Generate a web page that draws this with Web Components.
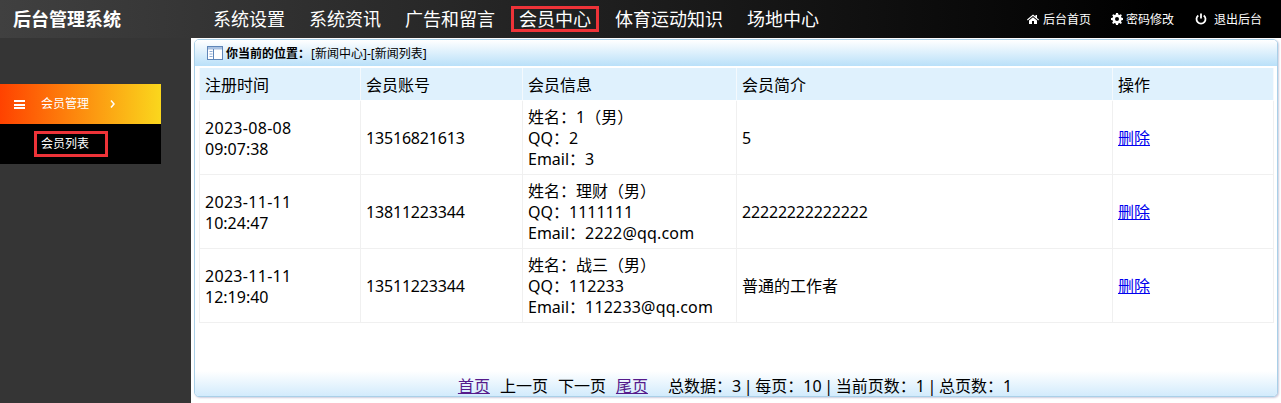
<!DOCTYPE html>
<html lang="zh">
<head>
<meta charset="utf-8">
<title>后台管理系统</title>
<style>
  html, body { margin: 0; height: 100%; overflow: hidden; background: #fff; }
  body { font-family: "Noto Sans", "Noto Sans CJK SC", sans-serif; color: #000; }
  admin-page { height: 403px; }
  .phone { letter-spacing: -.18px; }
  .date { letter-spacing: .3px; }
  .mail { letter-spacing: .18px; }
  grid-row a { color: #00e; }
</style>
</head>
<body>
<script>
const define = (name, html) => {
  customElements.define(name, class extends HTMLElement {
    constructor() {
      super();
      this.attachShadow({ mode: 'open' }).innerHTML = html;
    }
  });
};

define('top-link', `
  <style>
    :host { display: block; padding: 0 12px; font-size: 18px; line-height: 26px; color: #fff; white-space: nowrap; }
    :host([active]) span { display: block; margin: 0 -8px; padding: 0 5px; border: 3px solid #ee3338; line-height: 20px; }
  </style>
  <span><slot></slot></span>`);

define('tool-link', `
  <style>
    :host { display: flex; align-items: center; font-size: 12px; color: #fff; white-space: nowrap; }
    ::slotted(svg) { width: 12px; height: 12px; fill: #fff; margin-right: 4px; }
  </style>
  <slot name="icon"></slot><slot></slot>`);

define('top-bar', `
  <style>
    :host { display: flex; align-items: center; height: 38px; color: #fff;
      background: linear-gradient(to right, #404040, #000 90%); }
    .logo { width: 201px; padding: 0 0 2px 13px; box-sizing: border-box; font-size: 18px; font-weight: 700; white-space: nowrap; }
    nav { display: flex; align-items: center; flex: 1; }
    .tools { display: flex; gap: 20px; margin-right: 19px; }
    ::slotted(tool-link:last-child) { margin-left: 1px; }
  </style>
  <div class="logo"><slot name="logo"></slot></div>
  <nav><slot name="nav"></slot></nav>
  <div class="tools"><slot name="tools"></slot></div>`);

define('side-menu', `
  <style>
    :host { display: block; width: 191px; flex: none; background: #353535; padding-top: 46px; box-sizing: border-box; color: #fff; font-size: 12px; }
    .head { display: flex; align-items: center; width: 161px; height: 40px; background: linear-gradient(to right, #ff4200, #fad71d); }
    .bars { width: 11px; height: 9px; margin-left: 14px; margin-right: 16px; flex: none;
      background: linear-gradient(#fff 2px, transparent 2px 3.5px, #fff 3.5px 5.5px, transparent 5.5px 7px, #fff 7px); }
    .title { padding-bottom: 2px; }
    svg { width: 5px; height: 8px; margin-left: 21px; fill: none; stroke: #fff; stroke-width: 1.5; }
    .sub { width: 161px; height: 40px; background: #000; display: flex; align-items: center; padding-left: 34px; box-sizing: border-box; }
    .box { border: 3px solid #ee3338; height: 20px; width: 64px; padding-left: 4px; line-height: 19px; white-space: nowrap; }
  </style>
  <div class="head"><span class="bars"></span><span class="title"><slot name="title"></slot></span><svg viewBox="0 0 5 8"><path d="M1 .5l3 3.500-3 3.500"/></svg></div>
  <div class="sub"><div class="box"><slot></slot></div></div>`);

define('grid-row', `
  <style>
    :host { display: grid; grid-template-columns: 162px 162px 214px 376px 161px; font-size: 16px; line-height: 21px; min-height: 74px; }
    :host([head]) { min-height: 33px; background: #dff1fd; }
    :host([head]) ::slotted(*) { border-bottom-color: #fff; border-right-color: #f4f9fd; }
    ::slotted(*) { display: flex; align-items: center; padding: 2px 5px 0; box-sizing: border-box; border-right: 1px solid #f0f0f0; border-bottom: 1px solid #f0f0f0; }
    ::slotted(:first-child) { border-left: 1px solid #f0f0f0; }
    :host([head]) ::slotted(:first-child) { border-left-color: #f4f9fd; }
  </style>
  <slot></slot>`);

define('main-panel', `
  <style>
    :host { display: flex; flex-direction: column; box-sizing: border-box; flex: none; width: 1084px; height: 358px; margin: 1px 0 0 3px;
      border: 1px solid #a9d0e8; border-radius: 5px; box-shadow: 1px 1px 2px #ccd; background: #fff; overflow: hidden; }
    .crumb { display: flex; align-items: center; height: 26px; padding-left: 12px; font-size: 12px; flex: none;
      background: linear-gradient(#fff, #b9e0f9); }
    .crumb svg { width: 16px; height: 14px; margin-right: 3px; }
    .crumb b { margin-right: 1px; }
    .body { flex: 1; padding: 2px 3px 0 4px; }
    .foot { display: flex; justify-content: center; align-items: flex-end; height: 25px; padding-right: 2px; flex: none; font-size: 16px; line-height: 20px; white-space: nowrap;
      background: linear-gradient(#fff, #d2ebfc); }
  </style>
  <div class="crumb">
    <svg viewBox="0 0 16 14"><rect x=".5" y=".5" width="15" height="13" fill="#fff" stroke="#5f86b8"/><rect x="1" y="1" width="14" height="2.500" fill="#a9c2e2"/><path d="M6.500 3v10" stroke="#5f86b8"/><path d="M2.500 5.500h3M2.500 8h3M2.500 10.500h3" stroke="#8fabd2"/></svg>
    <b><slot name="label"></slot></b><slot name="path"></slot>
  </div>
  <div class="body"><slot></slot></div>
  <div class="foot"><slot name="foot"></slot></div>`);

define('pager-bar', `
  <style>
    :host { display: flex; gap: 10px; }
    ::slotted(a) { color: #551a8b; }
    ::slotted(.sum) { margin-left: 10px; word-spacing: -1.5px; }
  </style>
  <slot></slot>`);

define('admin-page', `
  <style>
    :host { display: block; overflow: hidden; }
    .cols { display: flex; height: 365px; }
  </style>
  <slot name="top"></slot>
  <div class="cols"><slot name="side"></slot><slot></slot></div>`);
</script>

<admin-page>
  <top-bar slot="top">
    <span slot="logo">后台管理系统</span>
    <top-link slot="nav">系统设置</top-link>
    <top-link slot="nav">系统资讯</top-link>
    <top-link slot="nav">广告和留言</top-link>
    <top-link slot="nav" active>会员中心</top-link>
    <top-link slot="nav">体育运动知识</top-link>
    <top-link slot="nav">场地中心</top-link>
    <tool-link slot="tools"><svg slot="icon" viewBox="0 0 12 12"><path d="M6 1.500L0 6.600l.7.800L6 3l5.300 4.400.7-.8-2-1.700V2H8.500v1.500zM2 7.500V11h3V8h2v3h3V7.500L6 4.200z"/></svg>后台首页</tool-link>
    <tool-link slot="tools"><svg slot="icon" viewBox="0 0 12 12" style="margin-right:3px"><path fill-rule="evenodd" d="M5 0h2l.3 1.600 1.100.5L9.800 1.200l1.100 1.100-.9 1.300.5 1.100L12 5v2l-1.600.3-.4 1.100.9 1.400-1.100 1.100-1.400-.9-1.100.4L7 12H5l-.3-1.600-1.100-.4-1.400.9-1.100-1.100.9-1.400-.4-1.100L0 7V5l1.600-.3.500-1.100-.9-1.300 1.100-1.100 1.400.9 1.100-.5zM6 4a2 2 0 100 4 2 2 0 000-4z"/></svg>密码修改</tool-link>
    <tool-link slot="tools"><svg slot="icon" viewBox="0 0 12 12" style="margin-right:7px"><path d="M6 .5v5" fill="none" stroke="#fff" stroke-width="1.800"/><path d="M3.300 2.500a4.500 4.500 0 105.400 0" fill="none" stroke="#fff" stroke-width="1.800"/></svg>退出后台</tool-link>
  </top-bar>

  <side-menu slot="side">
    <span slot="title">会员管理</span>
    会员列表
  </side-menu>

  <main-panel>
    <span slot="label">你当前的位置：</span>
    <span slot="path">[新闻中心]-[新闻列表]</span>

    <grid-row head><div>注册时间</div><div>会员账号</div><div>会员信息</div><div>会员简介</div><div>操作</div></grid-row>
    <grid-row><div><span><span class="date">2023-08-08</span><br>09:07:38</span></div><div class="phone">13516821613</div><div><span>姓名：1（男）<br>QQ：2<br>Email：3</span></div><div>5</div><div><a href="#">删除</a></div></grid-row>
    <grid-row><div><span><span class="date">2023-11-11</span><br>10:24:47</span></div><div class="phone">13811223344</div><div><span>姓名：理财（男）<br>QQ：1111111<br>Email：<span class="mail">2222@qq.com</span></span></div><div class="phone">22222222222222</div><div><a href="#">删除</a></div></grid-row>
    <grid-row><div><span><span class="date">2023-11-11</span><br>12:19:40</span></div><div class="phone">13511223344</div><div><span>姓名：战三（男）<br>QQ：112233<br>Email：<span class="mail">112233@qq.com</span></span></div><div>普通的工作者</div><div><a href="#">删除</a></div></grid-row>

    <pager-bar slot="foot">
      <a href="#">首页</a><span>上一页</span><span>下一页</span><a href="#">尾页</a>
      <span class="sum">总数据：3 | 每页：10 | 当前页数：1 | 总页数：1</span>
    </pager-bar>
  </main-panel>
</admin-page>
</body>
</html>
